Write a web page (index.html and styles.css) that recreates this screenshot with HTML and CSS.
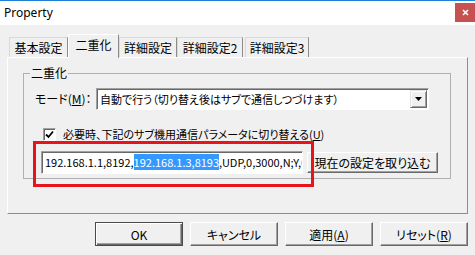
FILE: index.html
```html
<!DOCTYPE html>
<html lang="ja">
<head>
<meta charset="UTF-8" />
<title>Property</title>
<link rel="stylesheet" href="styles.css">
</head>
<body>
	<div class="titlebar">
		<span class="title">Property</span>
		<span class="close">
			<svg width="7" height="7" viewBox="0 0 7 7"><path d="M1 1L6 6M6 1L1 6" stroke="#fff" stroke-width="1.6" fill="none"/></svg>
		</span>
	</div>
	<div class="content">
		<ul class="tabs">
			<li class="tab t1">基本設定</li>
			<li class="tab t2 active">二重化</li>
			<li class="tab t3">詳細設定</li>
			<li class="tab t4">詳細設定2</li>
			<li class="tab t5">詳細設定3</li>
		</ul>
		<div class="panel">
			<fieldset class="group">
				<legend>二重化</legend>
				<div class="mode_row">
					<span class="mode_label">モード(<u>M</u>)：</span>
					<div class="combo">
						<span class="combo_text">自動で行う（切り替え後はサブで通信しつづけます）</span>
						<span class="combo_btn">
							<svg width="7" height="4" viewBox="0 0 7 4"><path d="M0 0H7L3.5 4Z" fill="#000"/></svg>
						</span>
					</div>
				</div>
				<div class="check_row">
					<span class="checkbox">
						<svg width="9" height="9" viewBox="0 0 9 9"><path d="M1 4.5L3.5 7L8 1.5" stroke="#000" stroke-width="1.8" fill="none"/></svg>
					</span>
					<span>必要時、下記のサブ機用通信パラメータに切り替える(<u>U</u>)</span>
				</div>
				<div class="param_row">
					<div class="textbox">192.168.1.1,8192,<span class="sel">192.168.1.3,8193</span>,UDP,0,3000,N;Y,0</div>
					<button class="btn load">現在の設定を取り込む</button>
					<div class="mark"></div>
				</div>
			</fieldset>
		</div>
		<div class="buttons">
			<button class="btn default">OK</button>
			<button class="btn">キャンセル</button>
			<button class="btn">適用(<u>A</u>)</button>
			<button class="btn">リセット(<u>R</u>)</button>
		</div>
	</div>
</body>
</html>
```
FILE: styles.css
```css
html, body {
	margin: 0;
	padding: 0;
}
body {
	width: 475px;
	height: 255px;
	overflow: hidden;
	background-color: #f0f0f0;
	font-family: "Noto Sans CJK JP", sans-serif;
	font-size: 11px;
	font-feature-settings: "palt";
	color: #000;
}
u {
	text-decoration: underline;
	text-underline-offset: 1px;
}

.titlebar {
	display: flex;
	justify-content: space-between;
	height: 24px;
	border-top: 1px solid #1e7fd8;
	background-color: #fff;
}
.title {
	padding-left: 4px;
	font-family: "Noto Sans", sans-serif;
	font-size: 12px;
	line-height: 24px;
}
.close {
	display: flex;
	align-items: center;
	justify-content: center;
	width: 20px;
	height: 19px;
	margin-top: 2px;
	background-color: #c75050;
}

.content {
	padding: 9px 7px 0 7px;
}
.tabs {
	display: flex;
	align-items: flex-end;
	height: 23px;
	margin: 0;
	padding: 0 0 0 2px;
	list-style: none;
}
.tab {
	box-sizing: border-box;
	height: 20px;
	font-size: 12px;
	line-height: 19px;
	text-align: center;
	border: 1px solid #d9d9d9;
	border-right-color: #8c8c8c;
	border-bottom: none;
	background-color: #f0f0f0;
}
.t1 { width: 59px; }
.t2 { width: 51px; }
.t3 { width: 58px; }
.t4 { width: 66px; }
.t5 { width: 64px; margin-left: 2px; }
.tab.active {
	position: relative;
	height: 24px;
	margin-bottom: -1px;
	line-height: 19px;
	padding-bottom: 3px;
	border-color: #fff;
	border-right-color: #8c8c8c;
	z-index: 1;
}

.panel {
	box-sizing: border-box;
	width: 461px;
	height: 157px;
	padding: 8px 0 0 15px;
	border: 1px solid #fff;
	border-right-color: #8c8c8c;
	border-bottom-color: #8c8c8c;
}
.group {
	box-sizing: border-box;
	width: 428px;
	margin: 0;
	padding: 0 0 4px 0;
	border: 1px solid #b0b0b0;
}
.group legend {
	margin-left: 6px;
	padding: 0 1px;
	font-size: 12px;
	line-height: 14px;
}

.mode_row {
	display: flex;
	align-items: center;
	margin-top: 8px;
	padding-left: 11px;
}
.mode_label {
	width: 61px;
	font-size: 12px;
	line-height: 16px;
}
.combo {
	box-sizing: border-box;
	display: flex;
	align-items: center;
	justify-content: space-between;
	width: 333px;
	height: 22px;
	border: 1px solid;
	border-color: #a0a0a0 #fff #fff #a0a0a0;
	box-shadow: inset 1px 1px 0 #696969;
	background-color: #fff;
}
.combo_text {
	padding-left: 3px;
	line-height: 16px;
}
.combo_btn {
	box-sizing: border-box;
	display: flex;
	align-items: center;
	justify-content: center;
	width: 17px;
	height: 18px;
	margin-right: 1px;
	border: 1px solid;
	border-color: #e3e3e3 #696969 #696969 #e3e3e3;
	box-shadow: inset 1px 1px 0 #fff, inset -1px -1px 0 #a0a0a0;
	background-color: #f0f0f0;
}

.check_row {
	display: flex;
	align-items: center;
	margin-top: 17px;
	padding-left: 19px;
	line-height: 14px;
}
.checkbox {
	box-sizing: border-box;
	display: flex;
	align-items: center;
	justify-content: center;
	width: 13px;
	height: 13px;
	margin-right: 7px;
	border: 1px solid;
	border-color: #a0a0a0 #fff #fff #a0a0a0;
	box-shadow: inset 1px 1px 0 #696969;
	background-color: #fff;
}

.param_row {
	position: relative;
	display: flex;
	align-items: center;
	margin-top: 10px;
	margin-left: 17px;
}
.textbox {
	box-sizing: border-box;
	width: 262px;
	height: 23px;
	padding-left: 3px;
	overflow: hidden;
	white-space: nowrap;
	line-height: 21px;
	border: 1px solid;
	border-color: #a0a0a0 #fff #fff #a0a0a0;
	box-shadow: inset 1px 1px 0 #696969;
	background-color: #fff;
	font-feature-settings: normal;
}
.sel {
	background-color: #3399ff;
	color: #fff;
}
.load {
	width: 131px;
	height: 21px;
	margin-left: 4px;
	font-size: 11px;
}
.mark {
	position: absolute;
	left: -8px;
	top: -10px;
	width: 281px;
	height: 46px;
	box-sizing: border-box;
	border: 3px solid #e8141c;
}

.btn {
	box-sizing: border-box;
	padding: 0;
	font-family: inherit;
	font-size: 12px;
	font-feature-settings: "palt";
	color: #000;
	border: 1px solid;
	border-color: #fff #696969 #696969 #fff;
	box-shadow: inset -1px -1px 0 #a0a0a0;
	background-color: #f0f0f0;
}
.buttons {
	display: flex;
	justify-content: flex-end;
	gap: 7px;
	margin-top: 8px;
}
.buttons .btn {
	width: 88px;
	height: 24px;
}
.btn.default {
	border-color: #4a4a4a;
	box-shadow: inset 1px 1px 0 #fff, inset -1px -1px 0 #696969, inset -2px -2px 0 #a0a0a0;
}
```
